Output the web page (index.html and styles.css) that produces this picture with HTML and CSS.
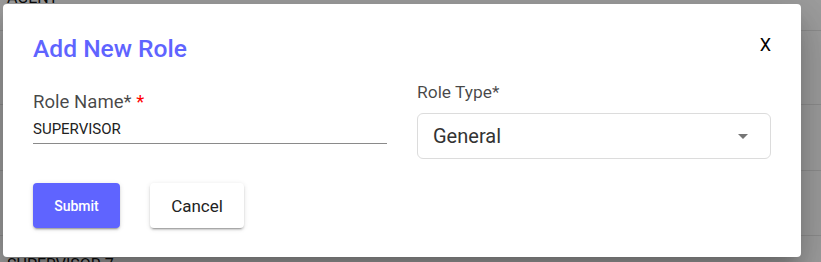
FILE: index.html
```html
<!DOCTYPE html>
<html lang="en">
<head>
<meta charset="utf-8">
<title>Add New Role</title>
<link rel="stylesheet" href="styles.css">
</head>
<body>
<div class="page">
  <div class="table">
    <div class="row row-1"><span class="cell">AGENT</span></div>
    <div class="row row-2"></div>
    <div class="row row-3"></div>
    <div class="row row-4"></div>
    <div class="row row-5"><span class="cell">SUPERVISOR 7</span></div>
  </div>
  <div class="overlay"></div>
  <div class="dialog" role="dialog">
    <div class="dialog-header">
      <h2 class="dialog-title">Add New Role</h2>
      <span class="close">X</span>
    </div>
    <div class="fields">
      <div class="field field-name">
        <label class="label">Role Name* <span class="req">*</span></label>
        <div class="input">SUPERVISOR</div>
      </div>
      <div class="field field-type">
        <label class="label label-type">Role Type*</label>
        <div class="select">
          <span class="select-value">General</span>
          <svg class="arrow" width="24" height="24" viewBox="0 0 24 24"><path d="M7 10l5 5 5-5z" fill="#757575"/></svg>
        </div>
      </div>
    </div>
    <div class="actions">
      <button class="btn btn-primary">Submit</button>
      <button class="btn btn-secondary">Cancel</button>
    </div>
  </div>
</div>
</body>
</html>
```

FILE: styles.css
```css
* { box-sizing: border-box; }
html, body { margin: 0; padding: 0; }
body {
  font-family: Roboto, "Noto Sans", Arial, sans-serif;
  background: #ffffff;
  width: 821px;
  height: 262px;
  overflow: hidden;
}
.page {
  position: relative;
  width: 821px;
  height: 262px;
  overflow: hidden;
}
.table {
  margin-top: -20px;
  font-size: 16px;
  line-height: 20px;
  color: #111;
}
.row {
  border-bottom: 1px solid #e6e6e6;
  padding-left: 7px;
}
.row-1 { height: 51px; padding-top: 8px; }
.row-2 { height: 74px; }
.row-3 { height: 66px; }
.row-4 { height: 65px; }
.row-5 { padding-top: 19px; border-bottom: none; height: 60px; }

.overlay {
  position: absolute;
  inset: 0;
  background: rgba(0, 0, 0, 0.38);
}
.dialog {
  position: absolute;
  left: 3px;
  top: 4px;
  width: 798px;
  height: 253px;
  background: #fff;
  border-radius: 4px;
  padding: 30px 30px 0 30px;
  box-shadow: 0 11px 15px -7px rgba(0,0,0,0.2), 0 24px 38px 3px rgba(0,0,0,0.14), 0 9px 46px 8px rgba(0,0,0,0.12);
}
.dialog-header {
  display: flex;
  justify-content: space-between;
  align-items: flex-start;
  height: 30px;
}
.dialog-title {
  margin: 0;
  font-size: 24.6px;
  line-height: 30px;
  font-weight: 500;
  color: #5f64ff;
}
.close {
  font-size: 18px;
  line-height: 18px;
  margin-top: 2px;
  color: #000;
  cursor: pointer;
}
.fields {
  display: grid;
  grid-template-columns: 354px 354px;
  column-gap: 30px;
  margin-top: 18px;
  align-items: start;
}
.field { display: flex; flex-direction: column; }
.field-name { margin-top: 10px; }
.label {
  font-size: 18.6px;
  line-height: 20px;
  color: rgba(0,0,0,0.72);
}
.label-type { font-size: 17.4px; }
.req { color: #ff0000; }
.input {
  margin-top: 8px;
  font-size: 15px;
  line-height: 18px;
  color: #222;
  padding-bottom: 5px;
  border-bottom: 1px solid #8a8a8a;
}
.select {
  margin-top: 11px;
  height: 46px;
  border: 1px solid #dcdcdc;
  border-radius: 6px;
  display: flex;
  align-items: center;
  justify-content: space-between;
  padding: 0 15px 0 15px;
}
.select-value {
  font-size: 20px;
  color: #333;
}
.arrow { display: block; }
.actions {
  display: flex;
  gap: 30px;
  margin-top: 24px;
}
.btn {
  height: 45px;
  border: none;
  border-radius: 4px;
  font-family: Roboto, "Noto Sans", Arial, sans-serif;
  cursor: pointer;
  padding: 0;
}
.btn-primary {
  width: 87px;
  background: #5f64ff;
  color: #fff;
  font-size: 14px;
  font-weight: 500;
  box-shadow: 0 3px 1px -2px rgba(0,0,0,0.2), 0 2px 2px 0 rgba(0,0,0,0.14), 0 1px 5px 0 rgba(0,0,0,0.12);
}
.btn-secondary {
  width: 94px;
  background: #fff;
  color: #222;
  font-size: 17px;
  box-shadow: 0 3px 1px -2px rgba(0,0,0,0.2), 0 2px 2px 0 rgba(0,0,0,0.14), 0 1px 5px 0 rgba(0,0,0,0.12);
}
```
